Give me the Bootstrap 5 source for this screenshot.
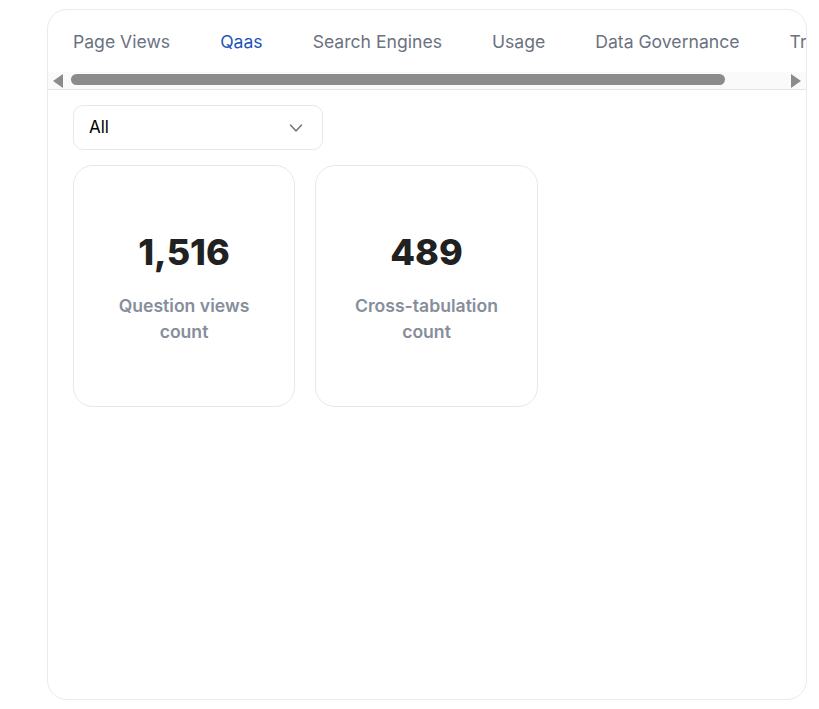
<!DOCTYPE html>
<html lang="en">
<head>
<meta charset="utf-8">
<title>Stats</title>
<link rel="stylesheet" href="https://cdn.jsdelivr.net/npm/bootstrap@5.3.0/dist/css/bootstrap.min.css">
<style>
html, body { height: 100%; background: #fff; font-family: Inter, "Liberation Sans", sans-serif; overflow: hidden; }
.shell { width: 760px; height: 691px; margin: 9px 0 0 47px; border: 1px solid #e9ebee; border-radius: 20px; overflow: hidden; background: #fff; }
.tabstrip { height: 62px; overflow: hidden; padding-top: 13px; }
.tabstrip .nav-link { padding: 7px 25px; font-size: 17.6px; line-height: 24px; color: #6b7280; white-space: nowrap; }
.tabstrip .nav-link.active { color: #2454b8; }
.fakebar { height: 17px; background: #fafafa; border-bottom: 1px solid #e4e6e9; box-sizing: content-box; }
.fakebar-track { padding: 2px 0 4px; }
.fakebar-thumb { height: 11px; background: #8b8b8b; border-radius: 6px; }
.arrow { width: 0; height: 0; border-top: 7px solid transparent; border-bottom: 7px solid transparent; flex: none; }
.arrow-l { border-right: 10px solid #8b8b8b; margin: 0 8px 0 5px; }
.arrow-r { border-left: 10px solid #8b8b8b; margin: 0 5px 0 66px; }
.content { padding: 15px 0 0 25px; }
.picker { width: 250px; height: 45px; border: 1px solid #e6e8eb; border-radius: 10px; font-size: 17px; color: #000; padding: 1px 36px 0 15px; background-position: right 18px center; background-size: 16px 16px;
  background-image: url("data:image/svg+xml,%3csvg xmlns='http://www.w3.org/2000/svg' viewBox='0 0 16 16'%3e%3cpath fill='none' stroke='%236b7280' stroke-linecap='round' stroke-linejoin='round' stroke-width='1.4' d='m2.5 5 5.5 6 5.5-6'/%3e%3c/svg%3e"); }
.tiles { gap: 20px; margin-top: 15px; }
.tile { width: 222px; height: 242px; border: 1px solid #e6e8eb; border-radius: 20px; padding-top: 62px; background: #fff; }
.tile + .tile { width: 223px; }
.tile-num { font-size: 36px; font-weight: 800; line-height: 48px; color: #212121; margin-bottom: 17px; }
.tile-label { font-size: 17.6px; font-weight: 600; line-height: 26px; color: #868e9b; }
</style>
</head>
<body>
<div class="shell">
  <ul class="nav flex-nowrap tabstrip">
    <li class="nav-item"><a class="nav-link" href="#">Page Views</a></li>
    <li class="nav-item"><a class="nav-link active" href="#">Qaas</a></li>
    <li class="nav-item"><a class="nav-link" href="#">Search Engines</a></li>
    <li class="nav-item"><a class="nav-link" href="#">Usage</a></li>
    <li class="nav-item"><a class="nav-link" href="#">Data Governance</a></li>
    <li class="nav-item"><a class="nav-link" href="#">Trends</a></li>
  </ul>
  <div class="fakebar d-flex align-items-center">
    <span class="arrow arrow-l"></span>
    <div class="fakebar-track flex-grow-1"><div class="fakebar-thumb"></div></div>
    <span class="arrow arrow-r"></span>
  </div>
  <div class="content">
    <select class="form-select picker"><option>All</option></select>
    <div class="d-flex tiles">
      <div class="tile text-center">
        <div class="tile-num">1,516</div>
        <div class="tile-label">Question views<br>count</div>
      </div>
      <div class="tile text-center">
        <div class="tile-num">489</div>
        <div class="tile-label">Cross-tabulation<br>count</div>
      </div>
    </div>
  </div>
</div>
<script src="https://cdn.jsdelivr.net/npm/bootstrap@5.3.0/dist/js/bootstrap.bundle.min.js"></script>
</body>
</html>
